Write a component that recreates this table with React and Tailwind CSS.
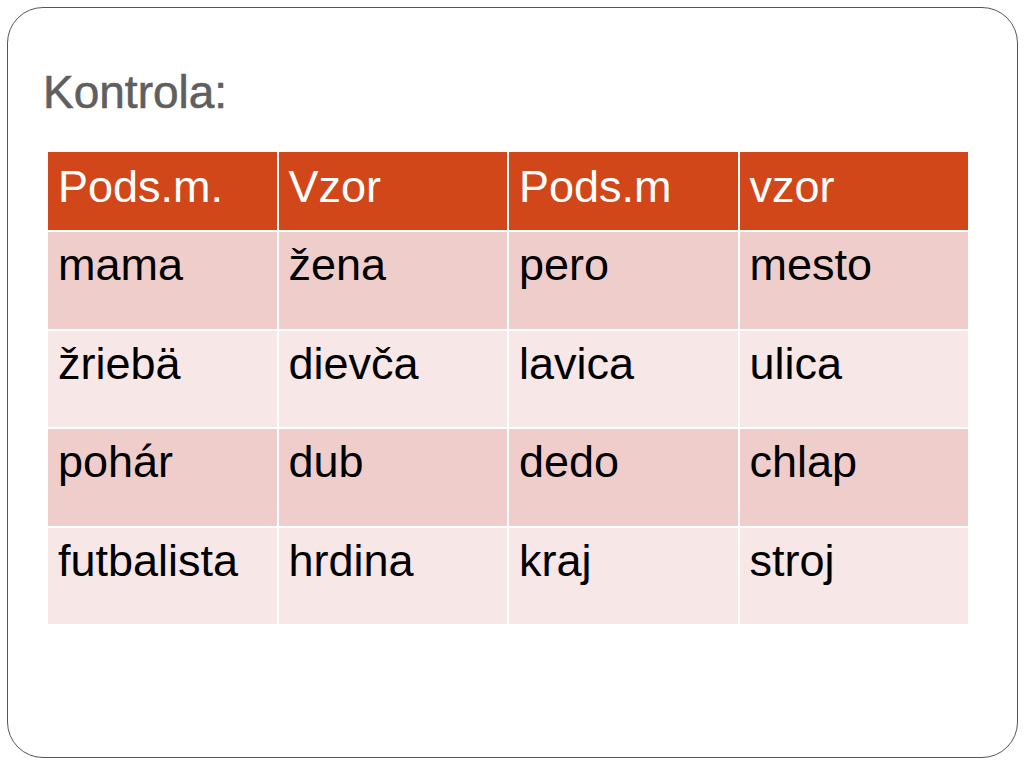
import React from "react";

const rows = [
  ["mama", "žena", "pero", "mesto"],
  ["žriebä", "dievča", "lavica", "ulica"],
  ["pohár", "dub", "dedo", "chlap"],
  ["futbalista", "hrdina", "kraj", "stroj"],
];

const header = ["Pods.m.", "Vzor", "Pods.m", "vzor"];

export default function App() {
  return (
    <div
      className="w-[1024px] h-[768px] bg-white pt-[7px] pl-[7px]"
      style={{ fontFamily: '"Liberation Sans", Arial, sans-serif' }}
    >
      <div className="w-[1011px] h-[751px] border border-[#555555] rounded-[36px] flex flex-col">
        {/* Title */}
        <h1 className="mt-[59px] pl-[35px] text-[46px] leading-[50px] text-[#5f5f5f] [-webkit-text-stroke:0.6px_#5f5f5f]">
          Kontrola:
        </h1>

        {/* Table */}
        <div className="mt-[35px] ml-[40px] w-[920px] grid grid-cols-4 grid-rows-[78px_97px_96px_97px_96px] gap-[2px] bg-white">
          {header.map((h) => (
            <div
              key={h}
              className="bg-[#d24719] text-white text-[45px] leading-[50px] pt-[10px] pl-[10px]"
            >
              {h}
            </div>
          ))}
          {rows.map((row, i) =>
            row.map((cell) => (
              <div
                key={cell}
                className={
                  (i % 2 === 0 ? "bg-[#efcdca]" : "bg-[#f7e7e6]") +
                  " text-black text-[45px] leading-[50px] pt-[8px] pl-[10px]"
                }
              >
                {cell}
              </div>
            ))
          )}
        </div>
      </div>
    </div>
  );
}
